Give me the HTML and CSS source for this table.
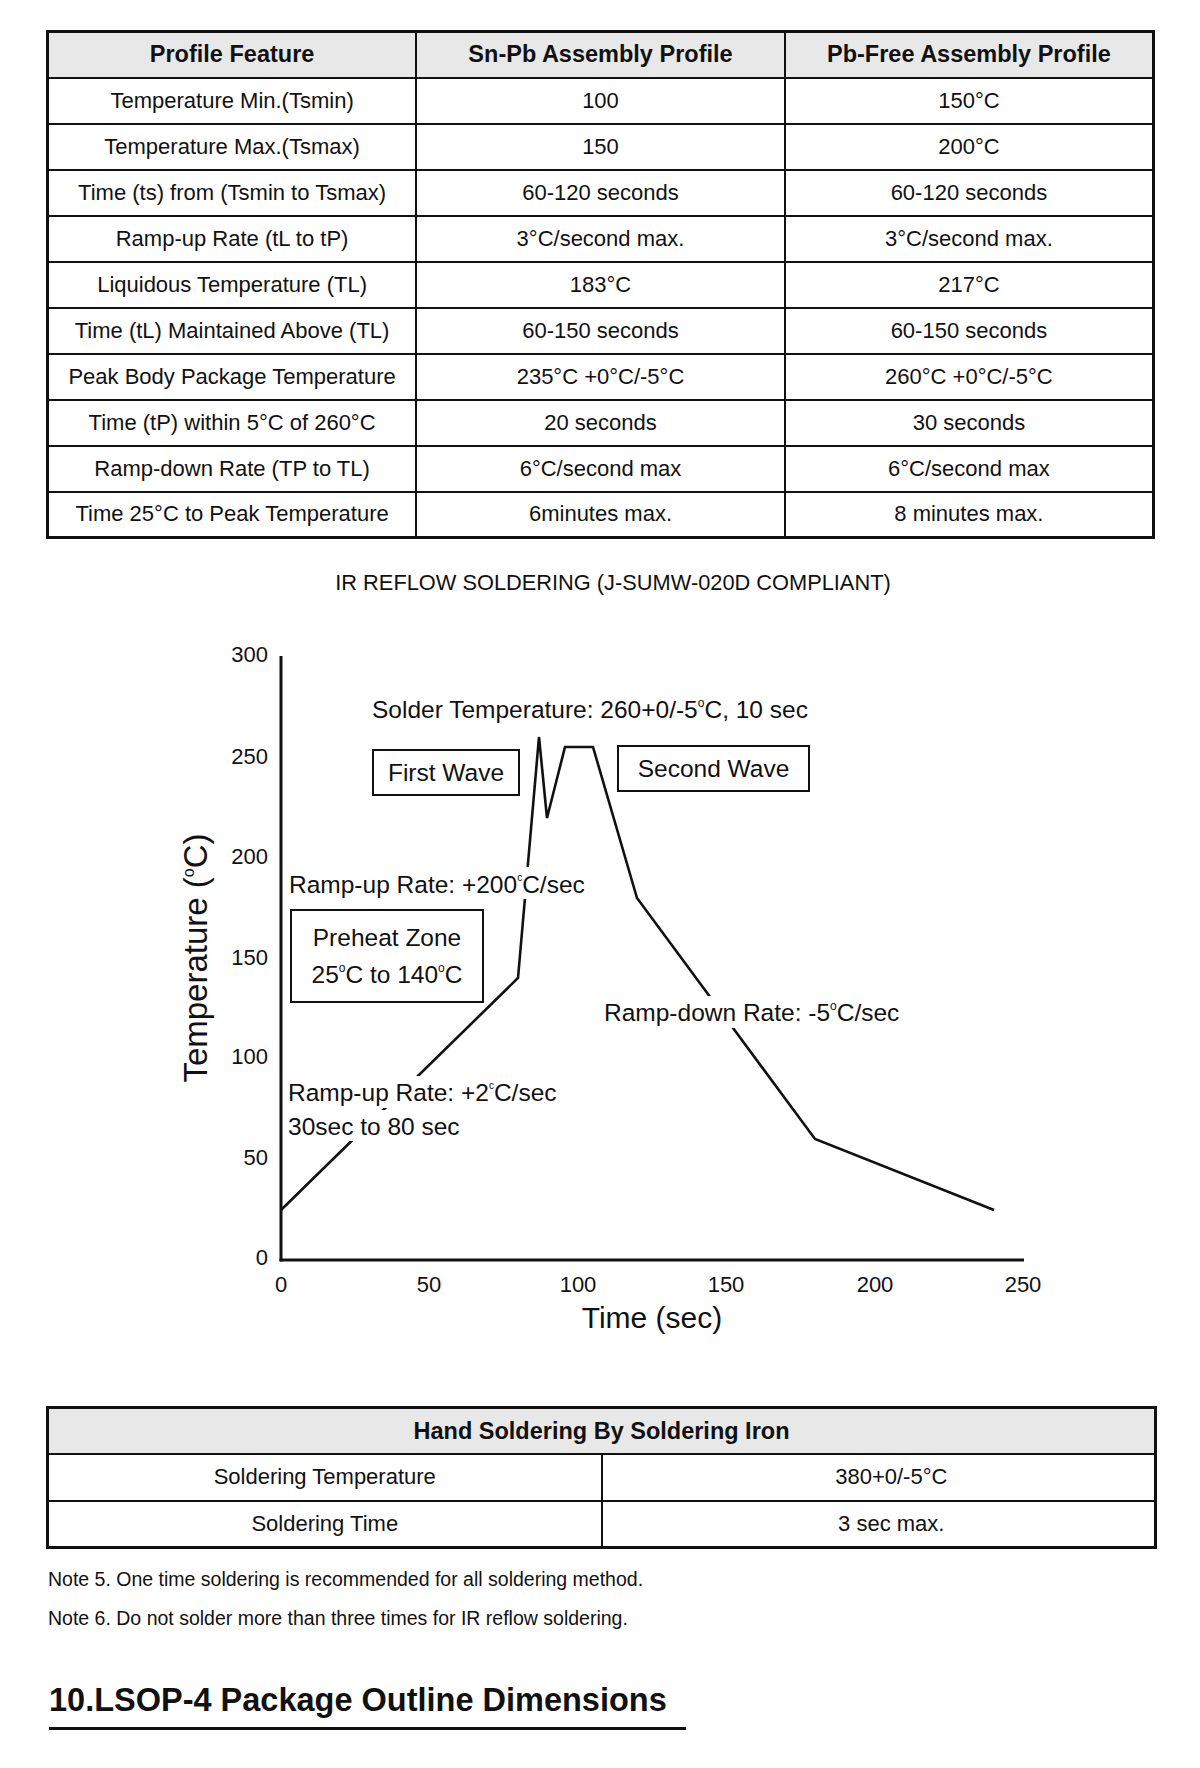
FILE: index.html
```html
<!DOCTYPE html>
<html lang="en">
<head>
<meta charset="utf-8">
<title>Soldering Profile</title>
<link rel="stylesheet" href="styles.css">
</head>
<body>
<div class="page">
  <table class="grid profile">
    <thead>
      <tr><th>Profile Feature</th><th>Sn-Pb Assembly Profile</th><th>Pb-Free Assembly Profile</th></tr>
    </thead>
    <tbody>
      <tr><td>Temperature Min.(Tsmin)</td><td>100</td><td>150°C</td></tr>
      <tr><td>Temperature Max.(Tsmax)</td><td>150</td><td>200°C</td></tr>
      <tr><td>Time (ts) from (Tsmin to Tsmax)</td><td>60-120 seconds</td><td>60-120 seconds</td></tr>
      <tr><td>Ramp-up Rate (tL to tP)</td><td>3°C/second max.</td><td>3°C/second max.</td></tr>
      <tr><td>Liquidous Temperature (TL)</td><td>183°C</td><td>217°C</td></tr>
      <tr><td>Time (tL) Maintained Above (TL)</td><td>60-150 seconds</td><td>60-150 seconds</td></tr>
      <tr><td>Peak Body Package Temperature</td><td>235°C +0°C/-5°C</td><td>260°C +0°C/-5°C</td></tr>
      <tr><td>Time (tP) within 5°C of 260°C</td><td>20 seconds</td><td>30 seconds</td></tr>
      <tr><td>Ramp-down Rate (TP to TL)</td><td>6°C/second max</td><td>6°C/second max</td></tr>
      <tr><td>Time 25°C to Peak Temperature</td><td>6minutes max.</td><td>8 minutes max.</td></tr>
    </tbody>
  </table>

  <p class="chart-title">IR REFLOW SOLDERING (J-SUMW-020D COMPLIANT)</p>

  <svg class="chart" viewBox="0 600 1200 760" width="1200" height="760" xmlns="http://www.w3.org/2000/svg">
    <!-- axes -->
    <line class="axis" x1="281" y1="657" x2="281" y2="1262.5"/>
    <line class="axis" x1="279.5" y1="1261" x2="1024" y2="1261"/>

    <!-- y ticks -->
    <g class="tick ytick">
      <text x="268" y="663">300</text>
      <text x="268" y="765">250</text>
      <text x="268" y="865">200</text>
      <text x="268" y="966">150</text>
      <text x="268" y="1065">100</text>
      <text x="268" y="1166">50</text>
      <text x="268" y="1266">0</text>
    </g>
    <!-- x ticks -->
    <g class="tick xtick">
      <text x="281" y="1293">0</text>
      <text x="429" y="1293">50</text>
      <text x="578" y="1293">100</text>
      <text x="726" y="1293">150</text>
      <text x="875" y="1293">200</text>
      <text x="1023" y="1293">250</text>
    </g>
    <text class="axis-title" x="652" y="1329">Time (sec)</text>
    <text class="axis-title ytitle" transform="translate(207 959) rotate(-90)" x="0" y="0">Temperature (<tspan class="sup-y" dy="-13">o</tspan><tspan dy="13">C)</tspan></text>

    <!-- profile curve -->
    <polyline class="curve" points="281,1211 518,979 539,738 547,819 565,748 593,748 637,899 815,1140 994,1211"/>

    <!-- label backgrounds -->
    <rect class="mask" x="286" y="868" width="303" height="32"/>
    <rect class="mask" x="286" y="1077" width="275" height="32"/>
    <rect class="mask" x="286" y="1111" width="175" height="31"/>
    <rect class="mask" x="602" y="997" width="300" height="32"/>

    <!-- boxes -->
    <rect class="box" x="373" y="751" width="146" height="45"/>
    <rect class="box" x="618" y="747" width="191" height="45"/>
    <rect class="box" x="291" y="911" width="192" height="92"/>

    <!-- labels -->
    <text class="lbl" x="372" y="719">Solder Temperature: 260+0/-5<tspan class="sup-o" dy="-11">o</tspan><tspan dy="11">C, 10 sec</tspan></text>
    <text class="lbl mid" x="446" y="782">First Wave</text>
    <text class="lbl mid" x="713.5" y="778">Second Wave</text>
    <text class="lbl" x="289" y="894">Ramp-up Rate: +200<tspan class="sup-c" dy="-12">c</tspan><tspan dy="12">C/sec</tspan></text>
    <text class="lbl mid" x="387" y="947">Preheat Zone</text>
    <text class="lbl mid" x="387" y="984">25<tspan class="sup-o" dy="-11">o</tspan><tspan dy="11">C to 140</tspan><tspan class="sup-o" dy="-11">o</tspan><tspan dy="11">C</tspan></text>
    <text class="lbl" x="604" y="1022">Ramp-down Rate: -5<tspan class="sup-o" dy="-11">o</tspan><tspan dy="11">C/sec</tspan></text>
    <text class="lbl" x="288" y="1102">Ramp-up Rate: +2<tspan class="sup-c" dy="-12">c</tspan><tspan dy="12">C/sec</tspan></text>
    <text class="lbl" x="288" y="1136">30sec to 80 sec</text>
  </svg>

  <table class="grid hand">
    <thead>
      <tr><th colspan="2">Hand Soldering By Soldering Iron</th></tr>
    </thead>
    <tbody>
      <tr><td>Soldering Temperature</td><td class="value">380+0/-5°C</td></tr>
      <tr><td>Soldering Time</td><td class="value">3 sec max.</td></tr>
    </tbody>
  </table>

  <p class="note note-first">Note 5. One time soldering is recommended for all soldering method.</p>
  <p class="note">Note 6. Do not solder more than three times for IR reflow soldering.</p>

  <h2 class="section-title">10.LSOP-4 Package Outline Dimensions</h2>
</div>
</body>
</html>
```

FILE: styles.css
```css
html, body {
  margin: 0;
  padding: 0;
  background: #ffffff;
}

body {
  font-family: "Liberation Sans", Arial, sans-serif;
  color: #111111;
}

.page {
  width: 1200px;
  padding-top: 30px;
}

/* ---------- tables ---------- */
.grid {
  border-collapse: collapse;
  table-layout: fixed;
  border: 3px solid #111111;
  margin-left: 46px;
}

.grid th,
.grid td {
  border: 2px solid #111111;
  padding: 0;
  text-align: center;
  vertical-align: middle;
  white-space: nowrap;
}

.grid th {
  background: #e8e8e8;
  font-weight: bold;
  font-size: 23.5px;
}

.grid td {
  font-size: 22px;
}

.grid tr {
  height: 46px;
}

.profile {
  width: 1109px;
}

.hand {
  width: 1111px;
  margin-top: 47px;
}

.hand tr {
  height: 46.5px;
}

.hand .value {
  padding-left: 26px;
}

/* ---------- chart ---------- */
.chart-title {
  margin: 31px 0 0 0;
  padding-left: 26px;
  font-size: 21.8px;
  line-height: 26px;
  text-align: center;
}

.chart {
  display: block;
  margin-top: 3px;
}

.chart .axis {
  stroke: #111111;
  stroke-width: 3;
}

.chart .curve {
  fill: none;
  stroke: #111111;
  stroke-width: 2.6;
  stroke-linejoin: miter;
}

.chart .mask {
  fill: #ffffff;
}

.chart .box {
  fill: #ffffff;
  stroke: #111111;
  stroke-width: 2;
}

.chart text {
  font-family: "Liberation Sans", Arial, sans-serif;
  fill: #111111;
}

.chart .tick text {
  font-size: 22px;
}

.chart .ytick text {
  text-anchor: end;
}

.chart .xtick text {
  text-anchor: middle;
}

.chart .axis-title {
  font-size: 30px;
  text-anchor: middle;
}

.chart .ytitle {
  font-size: 33px;
}

.chart .lbl {
  font-size: 24.5px;
}

.chart .mid {
  text-anchor: middle;
}

.chart .sup-o {
  font-size: 12px;
}

.chart .sup-y {
  font-size: 16px;
}

.chart .sup-c {
  font-size: 10px;
}

/* ---------- notes ---------- */
.note {
  margin: 15px 0 0 48px;
  font-size: 19.5px;
  line-height: 24px;
}

.note-first {
  margin-top: 18px;
}

.section-title {
  width: 637px;
  margin: 51px 0 0 49px;
  padding-bottom: 8px;
  border-bottom: 3px solid #111111;
  font-size: 32.5px;
  line-height: 38px;
  font-weight: bold;
}
```
